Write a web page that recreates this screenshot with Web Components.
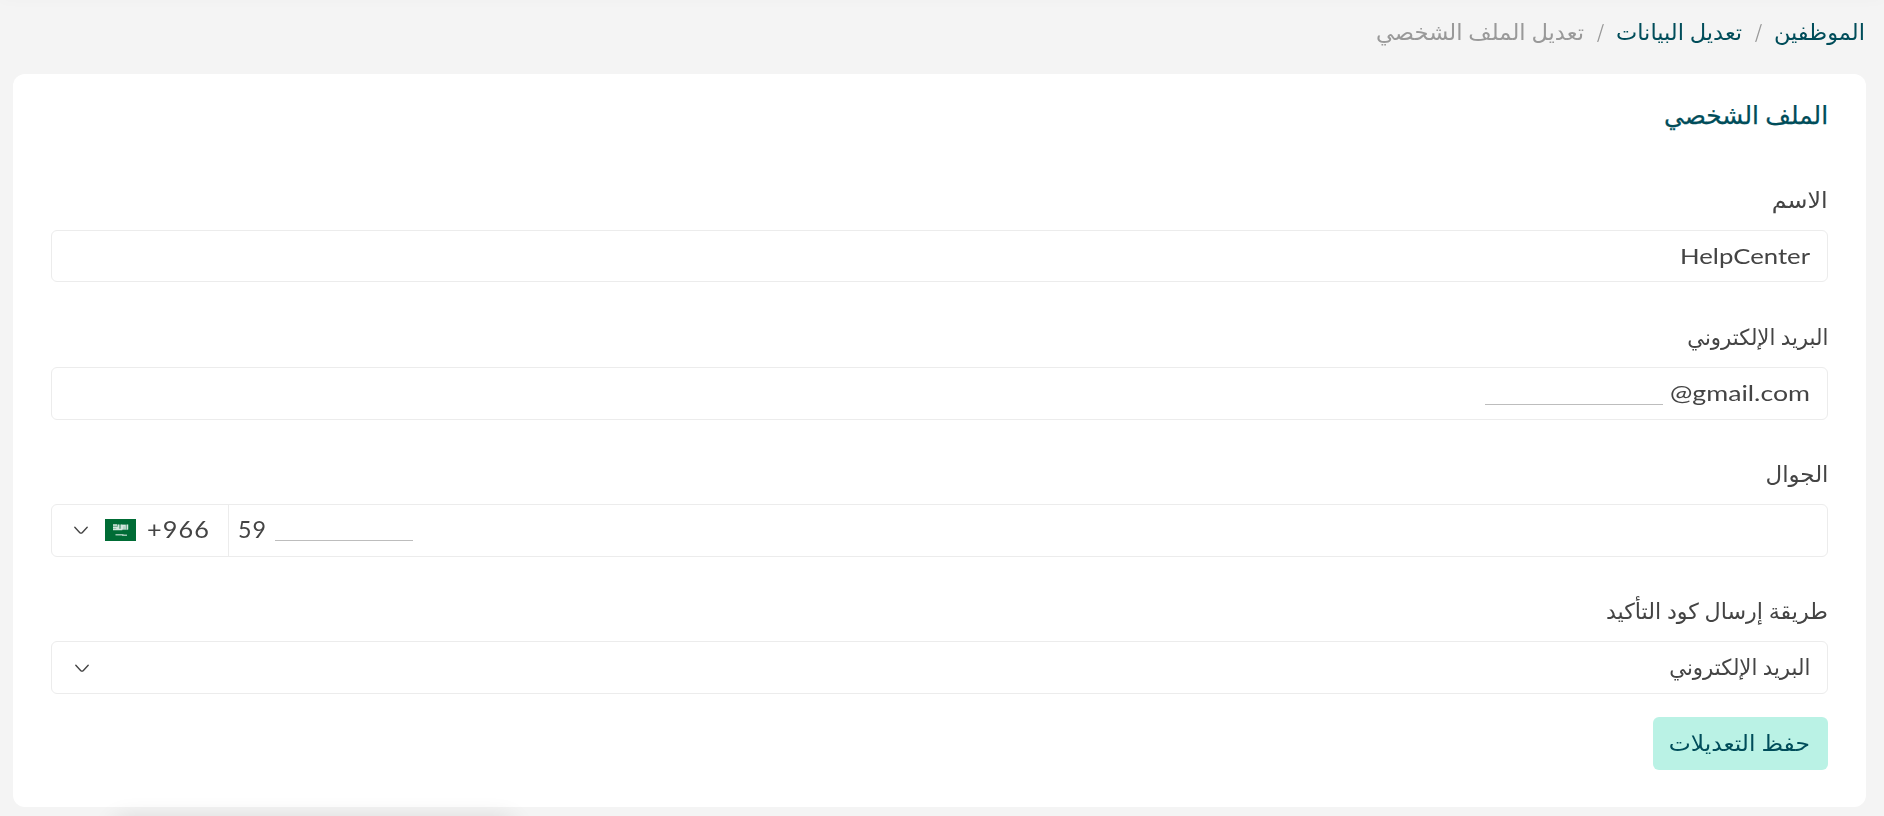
<!DOCTYPE html>
<html lang="ar" dir="rtl">
<head>
<meta charset="utf-8">
<title>تعديل الملف الشخصي</title>
<style>
html,body{margin:0;height:100%}
body{background:#f4f4f4;font-family:Lato,"DejaVu Sans",sans-serif;color:#444;overflow:hidden}
</style>
</head>
<body>
<profile-page></profile-page>
<script>
const define=(name,html,setup)=>customElements.define(name,class extends HTMLElement{
  connectedCallback(){
    if(this.shadowRoot)return;
    const t=document.createElement('template');t.innerHTML=html;
    this.attachShadow({mode:'open'}).append(t.content.cloneNode(true));
    if(setup)setup.call(this,this.shadowRoot);
  }
});
/* One line of text, condensed or widened to the width in "w". */
define('fit-text',`<style>
:host{display:inline-block;height:30px;line-height:30px;white-space:nowrap;flex:none}
span{display:inline-block;transform-origin:100% 50%}
:host([dir=ltr]) span{transform-origin:0 50%}
</style><span><slot></slot></span>`,function(root){
  const s=root.querySelector('span'),w=+this.getAttribute('w');
  this.style.width=w+'px';
  s.style.fontSize=(this.getAttribute('size')||21)+'px';
  s.style.transform='translateY('+(this.getAttribute('dy')||0)+'px) scaleX('+w/s.getBoundingClientRect().width+')';
});
define('chevron-icon',`<style>:host{display:block;width:16px;height:10px}svg{display:block}</style>
<svg width="16" height="10" viewBox="0 0 16 10" fill="none" stroke="#444" stroke-width="1.4" stroke-linecap="round" stroke-linejoin="round"><path d="M1.8 1.3 L6.6 6.4 Q8 7.8 9.4 6.4 L14.2 1.3"/></svg>`);
define('saudi-flag',`<style>:host{display:block;width:31px;height:22px}svg{display:block}</style>
<svg width="31" height="22" viewBox="0 0 31 22"><defs><filter id="f"><feGaussianBlur stdDeviation=".7"/></filter></defs><rect width="31" height="22" fill="#006c35"/><g filter="url(#f)" stroke="#fff" fill="none"><path d="M8 8.3h15" stroke-width="5.5" opacity=".35"/><path d="M8 6h4M8 8.5h4v2H8M13.5 5.5v5h3v-5M18 10.5v-4h2v4M22.5 5.5v5" stroke-width="1.5" opacity=".75"/><path d="M10.5 15.7h8M17 16.2h5" stroke-width="1.4" opacity=".6"/></g></svg>`);
define('crumb-trail',`<style>:host{display:flex;height:74px;box-sizing:border-box;padding:17px 19px 0 0;color:#999}
.l{color:#004d5a}.s{margin:0 12px}</style>
<fit-text class="l" w="91" size="22">الموظفين</fit-text><fit-text class="s" w="8" size="23">/</fit-text><fit-text class="l" w="126" size="22">تعديل البيانات</fit-text><fit-text class="s" w="8" size="23">/</fit-text><fit-text w="208" size="22">تعديل الملف الشخصي</fit-text>`);
define('form-field',`<style>
:host{display:block;height:137px}
.label{height:48px;display:flex;box-sizing:border-box;padding-top:3px}
.box{display:flex;align-items:flex-start;box-sizing:border-box;height:53px;border:1px solid #ececec;border-radius:6px;padding:10px 17px 0 18px}
:host([phone]) .box{padding:0;direction:ltr}
:host([first]) .box{height:52px}
</style><div class="label"><slot name="label"></slot></div><div class="box"><slot></slot></div>`);
define('blank-line',`<style>:host{display:block;height:1px;background:#bdbdbd;flex:none}</style>`,function(){this.style.width=this.getAttribute('w')+'px'});
define('dial-code',`<style>:host{display:flex;box-sizing:border-box;width:177px;height:51px;border-right:1px solid #ececec;flex:none}
chevron-icon{margin:21px 0 0 21px}saudi-flag{margin:14px 0 0 16px}fit-text{margin:9px 0 0 11px;letter-spacing:1px}</style>
<chevron-icon></chevron-icon><saudi-flag></saudi-flag><fit-text dir="ltr" w="63" size="23">+966</fit-text>`);
define('save-button',`<style>:host{display:block}button{display:flex;box-sizing:border-box;width:175px;height:53px;padding:11px 14px 0 0;border:0;border-radius:6px;background:#baf2e5;color:#004d5a;font:inherit}</style>
<button><fit-text w="141" size="22">حفظ التعديلات</fit-text></button>`);
define('profile-card',`<style>:host{display:block;box-sizing:border-box;height:733px;margin:0 18px 0 13px;padding:26px 38px 0 38px;border-radius:12px;background:#fff}
header{display:flex;height:82px;color:#004d5a;-webkit-text-stroke:.25px}</style><header><slot name="title"></slot></header><slot></slot>`);
define('profile-page',`<style>
:host{display:block;position:relative;height:816px;overflow:hidden}
.top,.dock{position:absolute;pointer-events:none}
.top{left:0;right:0;top:-10px;height:10px;box-shadow:0 0 14px rgba(0,0,0,.025)}
.dock{left:114px;top:820px;width:400px;height:50px;border-radius:12px;box-shadow:0 0 24px rgba(0,0,0,.14)}
.mail{margin:26px 7px 0 0}.num{margin:9px 0 0 9px;letter-spacing:1px}.tel{margin:35px 0 0 8px}
.select{display:flex;width:100%;justify-content:space-between}.select chevron-icon{margin:12px 0 0 4px}
save-button{margin-top:-13px}
</style>
<crumb-trail></crumb-trail>
<profile-card>
<fit-text slot="title" w="164" size="25" dy="-1">الملف الشخصي</fit-text>
<form-field first><fit-text slot="label" w="56" size="22">الاسم</fit-text><fit-text dir="ltr" w="130" size="22">HelpCenter</fit-text></form-field>
<form-field><fit-text slot="label" w="141" size="22">البريد الإلكتروني</fit-text><fit-text dir="ltr" w="140" size="22">@gmail.com</fit-text><blank-line class="mail" w="178"></blank-line></form-field>
<form-field phone><fit-text slot="label" w="63" size="22">الجوال</fit-text><dial-code></dial-code><fit-text class="num" dir="ltr" w="29" size="23">59</fit-text><blank-line class="tel" w="138"></blank-line></form-field>
<form-field><fit-text slot="label" w="222" size="22">طريقة إرسال كود التأكيد</fit-text><div class="select"><fit-text w="141" size="22">البريد الإلكتروني</fit-text><chevron-icon></chevron-icon></div></form-field>
<save-button></save-button>
</profile-card>
<div class="top"></div><div class="dock"></div>`);
</script>
</body>
</html>
